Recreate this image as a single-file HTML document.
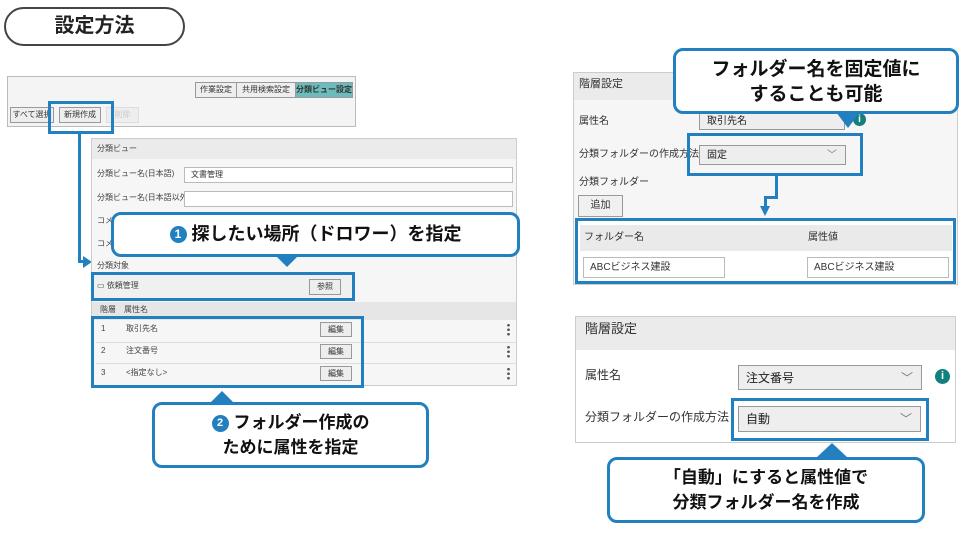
<!DOCTYPE html>
<html><head><meta charset="utf-8"><style>
*{margin:0;padding:0;box-sizing:border-box}
body{width:960px;height:540px;background:#fff;position:relative;overflow:hidden;font-family:"Liberation Sans","Noto Sans CJK JP",sans-serif;color:#333}
.a{position:absolute}
.t{position:absolute;white-space:nowrap;font-size:8px;color:#444;line-height:1}
.bx{position:absolute;border:3px solid #2280c0}
.btn{position:absolute;border:1px solid #999;background:#eee;font-size:8px;text-align:center;color:#333}
.co{position:absolute;background:#fff;border:3px solid #2280c0;border-radius:10px;font-weight:bold;color:#111;text-align:center}
.inp{position:absolute;background:#fff;border:1px solid #bbb;font-size:8px;padding-left:6px;color:#333}
.sel{position:absolute;background:#eee;border:1px solid #999;color:#222;padding-left:7px}
.num{display:inline-block;width:17px;height:17px;border-radius:50%;background:#2280c0;color:#fff;font-size:12px;line-height:17px;text-align:center;vertical-align:2px;margin-right:5px}
.dots{position:absolute;width:3px;height:13px;background:radial-gradient(circle,#555 1.2px,transparent 1.5px) 0 0/3px 4.5px repeat-y}
</style></head><body>

<div class="a" style="left:4px;top:7px;width:181px;height:39px;border:2px solid #444;border-radius:20px;text-align:center;font-size:20px;font-weight:bold;line-height:35px;color:#222">設定方法</div>

<!-- top toolbar -->
<div class="a" style="left:7px;top:76px;width:349px;height:51px;border:1px solid #bbb;background:#f4f4f4"></div>
<div class="btn" style="left:195px;top:82px;width:42px;height:16px;line-height:14px">作業設定</div>
<div class="btn" style="left:236px;top:82px;width:60px;height:16px;line-height:14px">共用検索設定</div>
<div class="btn" style="left:295px;top:82px;width:58px;height:16px;line-height:14px;background:#6cbcbc;font-weight:bold">分類ビュー設定</div>
<div class="btn" style="left:10px;top:107px;width:44px;height:16px;line-height:14px">すべて選択</div>
<div class="btn" style="left:59px;top:107px;width:42px;height:16px;line-height:14px">新規作成</div>
<div class="btn" style="left:106px;top:107px;width:33px;height:16px;line-height:14px;color:#ccc;border-color:#ddd">削除</div>
<div class="bx" style="left:48px;top:101px;width:66px;height:33px"></div>
<div class="a" style="left:78px;top:133px;width:3px;height:130px;background:#2280c0"></div>
<div class="a" style="left:78px;top:260px;width:8px;height:3px;background:#2280c0"></div>
<div class="a" style="left:83px;top:256px;border-left:9px solid #2280c0;border-top:6px solid transparent;border-bottom:6px solid transparent"></div>

<!-- main panel -->
<div class="a" style="left:91px;top:138px;width:426px;height:248px;border:1px solid #ccc;background:#f6f6f6"></div>
<div class="a" style="left:92px;top:139px;width:424px;height:20px;background:#ebebeb"></div>
<div class="t" style="left:97px;top:145px">分類ビュー</div>
<div class="t" style="left:97px;top:170px">分類ビュー名(日本語)</div>
<div class="inp" style="left:184px;top:167px;width:329px;height:16px;line-height:14px">文書管理</div>
<div class="t" style="left:97px;top:194px">分類ビュー名(日本語以外)</div>
<div class="inp" style="left:184px;top:191px;width:329px;height:16px"></div>
<div class="t" style="left:97px;top:217px">コメント</div>
<div class="t" style="left:97px;top:240px">コメント</div>
<div class="t" style="left:97px;top:262px">分類対象</div>
<div class="a" style="left:92px;top:274px;width:262px;height:25px;background:#f0f0f0"></div>
<div class="t" style="left:97px;top:282px">▭ 依頼管理</div>
<div class="btn" style="left:309px;top:279px;width:32px;height:16px;line-height:14px">参照</div>
<div class="bx" style="left:91px;top:272px;width:264px;height:29px"></div>
<div class="a" style="left:92px;top:302px;width:424px;height:18px;background:#e6e6e6"></div>
<div class="t" style="left:100px;top:306px">階層　属性名</div>
<div class="a" style="left:96px;top:342px;width:420px;height:1px;background:#ddd"></div>
<div class="a" style="left:96px;top:363px;width:420px;height:1px;background:#ddd"></div>
<div class="t" style="left:101px;top:325px">1</div><div class="t" style="left:126px;top:325px">取引先名</div>
<div class="t" style="left:101px;top:347px">2</div><div class="t" style="left:126px;top:347px">注文番号</div>
<div class="t" style="left:101px;top:369px">3</div><div class="t" style="left:126px;top:369px">&lt;指定なし&gt;</div>
<div class="btn" style="left:320px;top:322px;width:32px;height:15px;line-height:13px">編集</div>
<div class="btn" style="left:320px;top:344px;width:32px;height:15px;line-height:13px">編集</div>
<div class="btn" style="left:320px;top:366px;width:32px;height:15px;line-height:13px">編集</div>
<div class="dots" style="left:507px;top:323px"></div>
<div class="dots" style="left:507px;top:345px"></div>
<div class="dots" style="left:507px;top:367px"></div>
<div class="bx" style="left:91px;top:316px;width:273px;height:72px"></div>

<!-- callout 1 -->
<div class="co" style="left:111px;top:212px;width:409px;height:45px;font-size:18px;line-height:39px"><span class="num">1</span>探したい場所（ドロワー）を指定</div>
<div class="a" style="left:275px;top:255px;border-top:12px solid #2280c0;border-left:12px solid transparent;border-right:12px solid transparent"></div>

<!-- callout 2 -->
<div class="a" style="left:210px;top:391px;border-bottom:12px solid #2280c0;border-left:12px solid transparent;border-right:12px solid transparent"></div>
<div class="co" style="left:152px;top:402px;width:277px;height:66px;font-size:17px;line-height:25px;padding-top:5px"><span class="num" style="font-size:11px">2</span>フォルダー作成の<br>ために属性を指定</div>

<!-- right top panel -->
<div class="a" style="left:573px;top:72px;width:385px;height:213px;border:1px solid #ccc;background:#f6f6f6"></div>
<div class="a" style="left:574px;top:73px;width:383px;height:27px;background:#ebebeb"></div>
<div class="t" style="left:579px;top:79px;font-size:11px;color:#333">階層設定</div>
<div class="t" style="left:579px;top:117px;font-size:10px;color:#333">属性名</div>
<div class="sel" style="left:699px;top:113px;width:146px;height:17px;font-size:10px;line-height:16px">取引先名</div>
<div class="a" style="left:853px;top:113px;width:13px;height:13px;border-radius:50%;background:#138080;color:#fff;font-size:10px;font-weight:bold;text-align:center;line-height:13px">i</div>
<div class="t" style="left:579px;top:150px;font-size:10px;color:#333">分類フォルダーの作成方法</div>
<div class="sel" style="left:699px;top:145px;width:147px;height:20px;font-size:10px;line-height:19px">固定<span style="position:absolute;right:8px;color:#777">﹀</span></div>
<div class="bx" style="left:687px;top:133px;width:176px;height:43px"></div>
<div class="t" style="left:579px;top:178px;font-size:10px;color:#333">分類フォルダー</div>
<div class="btn" style="left:578px;top:195px;width:45px;height:22px;line-height:20px;font-size:10px;background:#f0f0f0">追加</div>
<div class="a" style="left:575px;top:218px;width:381px;height:66px;background:#fff"></div>
<div class="a" style="left:580px;top:225px;width:372px;height:26px;background:#eaeaea"></div>
<div class="t" style="left:584px;top:233px;font-size:10px;color:#333">フォルダー名</div>
<div class="t" style="left:808px;top:233px;font-size:10px;color:#333">属性値</div>
<div class="inp" style="left:583px;top:257px;width:142px;height:21px;line-height:19px;font-size:10px">ABCビジネス建設</div>
<div class="inp" style="left:807px;top:257px;width:142px;height:21px;line-height:19px;font-size:10px">ABCビジネス建設</div>
<div class="bx" style="left:575px;top:218px;width:381px;height:66px"></div>
<div class="a" style="left:775px;top:175px;width:3px;height:24px;background:#2280c0"></div>
<div class="a" style="left:764px;top:196px;width:14px;height:3px;background:#2280c0"></div>
<div class="a" style="left:764px;top:196px;width:3px;height:12px;background:#2280c0"></div>
<div class="a" style="left:760px;top:206px;border-top:10px solid #2280c0;border-left:5px solid transparent;border-right:5px solid transparent"></div>

<!-- callout 3 -->
<div class="co" style="left:673px;top:48px;width:286px;height:66px;font-size:19px;line-height:25px;padding-top:6px">フォルダー名を固定値に<br>することも可能</div>
<div class="a" style="left:836px;top:112px;border-top:16px solid #2280c0;border-left:12px solid transparent;border-right:12px solid transparent"></div>

<!-- right bottom panel -->
<div class="a" style="left:575px;top:316px;width:381px;height:127px;border:1px solid #ccc;background:#fff"></div>
<div class="a" style="left:576px;top:317px;width:379px;height:33px;background:#ebebeb"></div>
<div class="t" style="left:585px;top:322px;font-size:13px;color:#333">階層設定</div>
<div class="t" style="left:585px;top:369px;font-size:12px;color:#333">属性名</div>
<div class="sel" style="left:738px;top:365px;width:184px;height:25px;font-size:12px;line-height:24px">注文番号<span style="position:absolute;right:8px;color:#777">﹀</span></div>
<div class="a" style="left:935px;top:369px;width:15px;height:15px;border-radius:50%;background:#138080;color:#fff;font-size:11px;font-weight:bold;text-align:center;line-height:15px">i</div>
<div class="t" style="left:585px;top:411px;font-size:12px;color:#333">分類フォルダーの作成方法</div>
<div class="sel" style="left:738px;top:406px;width:183px;height:26px;font-size:12px;line-height:25px">自動<span style="position:absolute;right:8px;color:#777">﹀</span></div>
<div class="bx" style="left:731px;top:398px;width:198px;height:43px"></div>

<!-- callout 4 -->
<div class="a" style="left:816px;top:443px;border-bottom:15px solid #2280c0;border-left:16px solid transparent;border-right:16px solid transparent"></div>
<div class="co" style="left:607px;top:457px;width:318px;height:66px;font-size:17px;line-height:25px;padding-top:5px">「自動」にすると属性値で<br>分類フォルダー名を作成</div>

</body></html>
